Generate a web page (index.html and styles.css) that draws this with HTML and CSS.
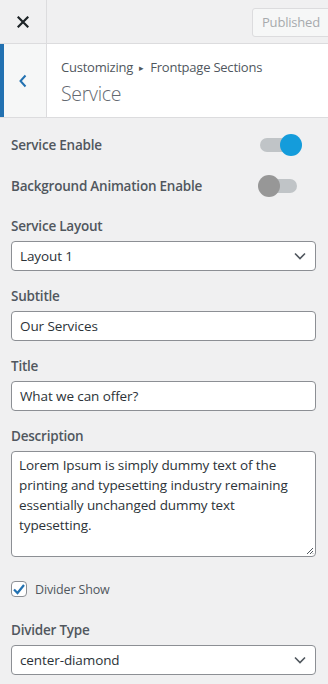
FILE: index.html
```html
<!DOCTYPE html>
<html>
<head>
<meta charset="utf-8">
<link rel="stylesheet" href="styles.css">
</head>
<body>
<div class="panel">
  <header class="topbar">
    <button class="close" aria-label="Close">
      <svg width="12" height="12" viewBox="0 0 12 12"><path d="M1.5 1.5L10.5 10.5M10.5 1.5L1.5 10.5" stroke="#1d2327" stroke-width="2.2" stroke-linecap="square"/></svg>
    </button>
    <div class="topbar-fill"></div>
    <button class="published" disabled>Published</button>
  </header>
  <div class="section-head">
    <button class="back" aria-label="Back">
      <svg width="10" height="14" viewBox="0 0 10 14"><path d="M7.5 1.5L2.5 7L7.5 12.5" fill="none" stroke="#2271b1" stroke-width="2"/></svg>
    </button>
    <div class="titles">
      <div class="crumb">Customizing <span class="tri">▸</span> Frontpage Sections</div>
      <div class="title">Service</div>
    </div>
  </div>
  <div class="controls">
    <div class="toggle-row">
      <span class="label">Service Enable</span>
      <span class="switch on"><span class="track"></span><span class="knob"></span></span>
    </div>
    <div class="toggle-row">
      <span class="label">Background Animation Enable</span>
      <span class="switch off"><span class="track"></span><span class="knob"></span></span>
    </div>
    <div class="field first">
      <span class="label">Service Layout</span>
      <div class="select"><span>Layout 1</span>
        <svg width="12" height="8" viewBox="0 0 12 8"><path d="M1 1.5L6 6.5L11 1.5" fill="none" stroke="#50575e" stroke-width="1.6"/></svg>
      </div>
    </div>
    <div class="field">
      <span class="label">Subtitle</span>
      <div class="input">Our Services</div>
    </div>
    <div class="field">
      <span class="label">Title</span>
      <div class="input">What we can offer?</div>
    </div>
    <div class="field">
      <span class="label">Description</span>
      <div class="textarea">Lorem Ipsum is simply dummy text of the printing and typesetting industry remaining essentially unchanged dummy text typesetting.
        <svg class="grip" width="8" height="8" viewBox="0 0 8 8"><path d="M7 1L1 7M7 4L4 7M7 6.5L6.5 7" stroke="#50575e" stroke-width="1"/></svg>
      </div>
    </div>
    <div class="check-row">
      <span class="checkbox"><svg width="14" height="12" viewBox="0 0 14 12"><path d="M2 6.5L5.5 10L12 2" fill="none" stroke="#2271b1" stroke-width="2.2"/></svg></span>
      <span class="check-label">Divider Show</span>
    </div>
    <div class="field">
      <span class="label">Divider Type</span>
      <div class="select"><span>center-diamond</span>
        <svg width="12" height="8" viewBox="0 0 12 8"><path d="M1 1.5L6 6.5L11 1.5" fill="none" stroke="#50575e" stroke-width="1.6"/></svg>
      </div>
    </div>
  </div>
</div>
</body>
</html>
```
FILE: styles.css
```css
* { box-sizing: border-box; }
html, body { margin: 0; padding: 0; }
body {
  background: #f0f0f1;
  font-family: "Open Sans", "Noto Sans", sans-serif;
  color: #50575e;
  width: 328px;
  height: 684px;
  overflow: hidden;
}
.panel { width: 328px; }
.topbar {
  display: flex;
  align-items: center;
  height: 44px;
  border-bottom: 1px solid #dcdcde;
  background: #f0f0f1;
}
.close {
  width: 47px;
  height: 43px;
  border: 0;
  border-right: 1px solid #dcdcde;
  background: transparent;
  display: flex;
  align-items: center;
  justify-content: center;
  padding: 0;
}
.topbar-fill { flex: 1; }
.published {
  height: 29px;
  width: 80px;
  margin-right: -4px;
  margin-top: 1px;
  border: 1px solid #dcdcde;
  border-radius: 3px;
  background: #f6f7f7;
  color: #a7aaad;
  font-family: inherit;
  font-size: 13px;
  letter-spacing: -0.2px;
  padding: 0 0 0 9px;
  text-align: left;
}
.section-head {
  display: flex;
  height: 74px;
  background: #fff;
  border-bottom: 1px solid #dcdcde;
}
.back {
  width: 47px;
  border: 0;
  border-left: 4px solid #2271b1;
  border-right: 1px solid #dcdcde;
  background: #f6f7f7;
  display: flex;
  align-items: center;
  justify-content: center;
  padding: 0 4px 0 0;
}
.titles {
  padding: 13px 0 0 14px;
}
.crumb {
  font-size: 13px;
  letter-spacing: -0.22px;
  line-height: 20px;
  color: #50575e;
}
.tri { font-size: 9px; position: relative; top: -1px; margin: 0 3px; }
.title {
  font-size: 19.5px;
  letter-spacing: -0.3px;
  font-weight: 300;
  line-height: 26px;
  color: #646970;
  margin-top: 2px;
}
.controls {
  padding: 10px 12px 0 11px;
  display: flex;
  flex-direction: column;
}
.label {
  font-size: 13.5px;
  letter-spacing: -0.22px;
  font-weight: 600;
  color: #50575e;
  line-height: 20px;
}
.toggle-row {
  display: flex;
  align-items: center;
  justify-content: space-between;
  height: 40px;
  margin-top: -3px;
}
.toggle-row + .toggle-row { margin-top: 1px; }
.switch {
  position: relative;
  width: 44px;
  height: 22px;
  margin-right: 14px;
}
.track {
  position: absolute;
  left: 2px; right: 4px;
  top: 4px; height: 14px;
  border-radius: 7px;
  background: #c0c4c7;
}
.knob {
  position: absolute;
  top: 0;
  width: 22px; height: 22px;
  border-radius: 50%;
}
.switch.on .knob { right: 0; background: #149cdb; }
.switch.on .track { left: 2px; right: 4px; }
.switch.off .knob { left: 0; background: #979797; }
.switch.off .track { left: 4px; right: 5px; }
.field {
  display: flex;
  flex-direction: column;
}
.field.first { margin-top: 10px; }
.field + .field { margin-top: 15px; }
.field .label { margin-bottom: 5px; }
.select, .input {
  height: 30px;
  background: #fff;
  border: 1px solid #8c8f94;
  border-radius: 4px;
  font-size: 13.5px;
  letter-spacing: -0.1px;
  color: #2c3338;
  display: flex;
  align-items: center;
  padding: 0 0 0 8px;
}
.select { justify-content: space-between; padding-right: 9px; }
.textarea {
  position: relative;
  height: 106px;
  background: #fff;
  border: 1px solid #8c8f94;
  border-radius: 4px;
  font-size: 13.5px;
  letter-spacing: -0.1px;
  line-height: 20px;
  color: #2c3338;
  padding: 3px 8px 0 7px;
}
.grip { position: absolute; right: 1px; bottom: 1px; }
.check-row {
  display: flex;
  align-items: center;
  margin-top: 21px;
  height: 22px;
}
.checkbox {
  width: 16px; height: 16px;
  border: 1px solid #8c8f94;
  border-radius: 4px;
  background: #fff;
  display: flex;
  align-items: center;
  justify-content: center;
}
.check-label {
  font-size: 12.5px;
  letter-spacing: -0.15px;
  margin-left: 8px;
  color: #50575e;
}
.check-row + .field { margin-top: 20px; }
```
